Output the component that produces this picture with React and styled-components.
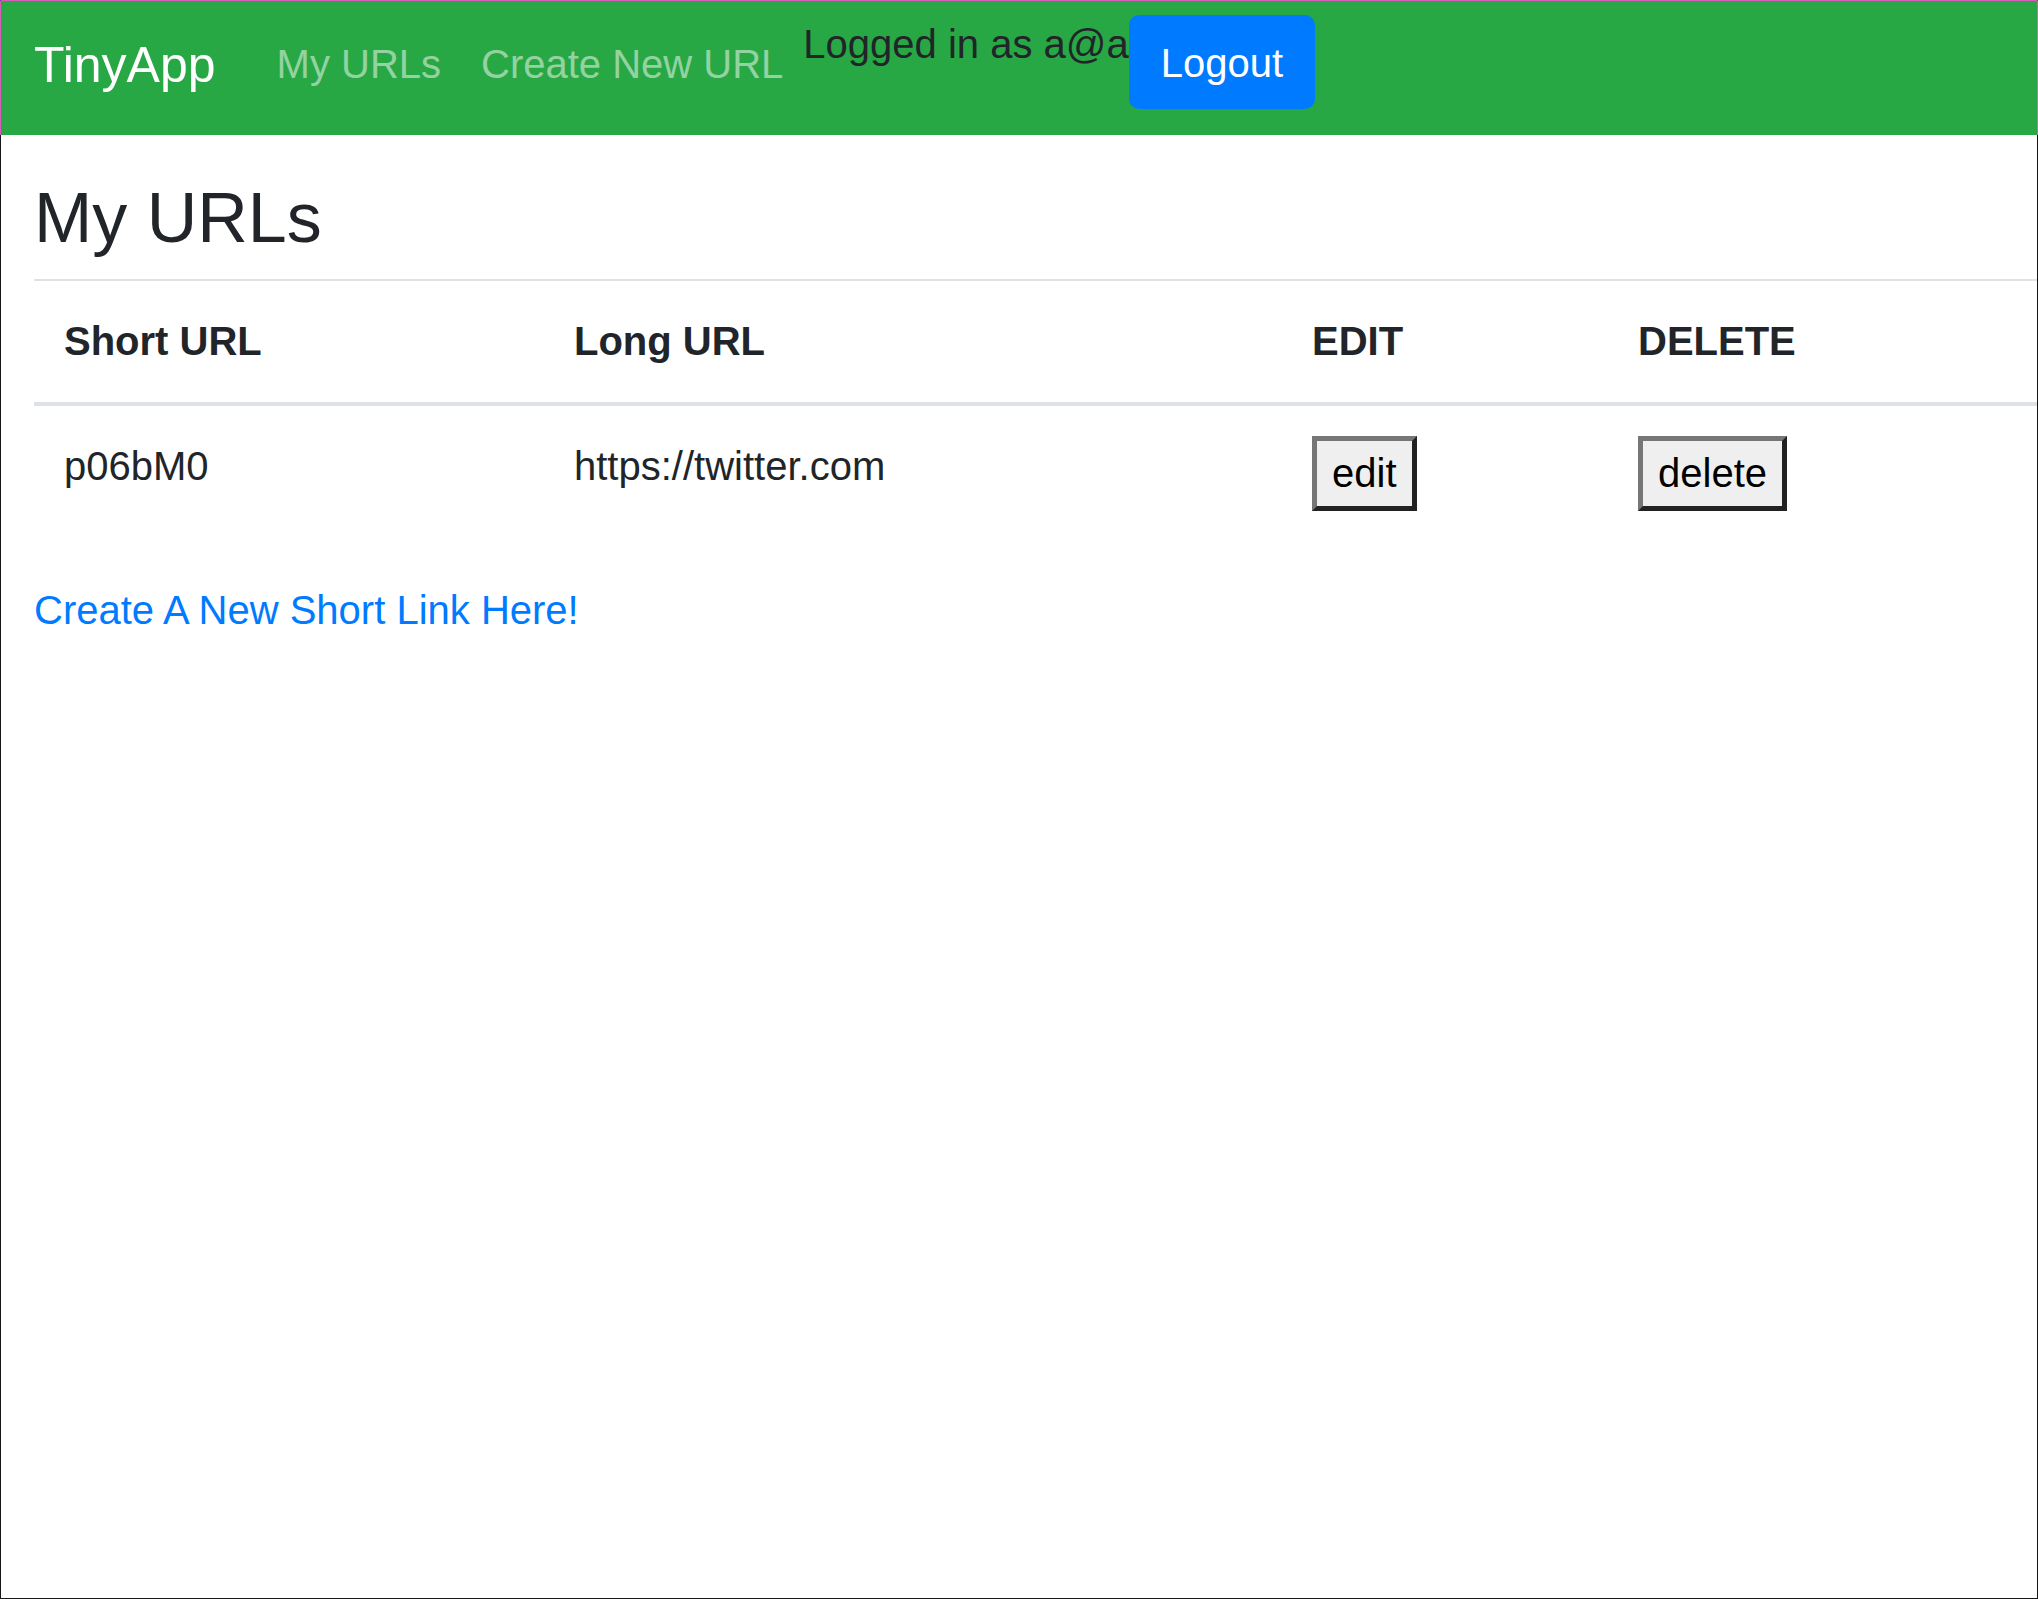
import React from "react";
import styled, { createGlobalStyle } from "styled-components";

const GlobalStyle = createGlobalStyle`
  html, body {
    margin: 0;
    padding: 0;
  }
  body {
    font-family: "Liberation Sans", Arial, sans-serif;
    color: #212529;
    background: #ffffff;
  }
  * {
    box-sizing: border-box;
  }
`;

const urls = [{ short: "p06bM0", long: "https://twitter.com" }];

const columns = [
  { label: "Short URL", width: 510 },
  { label: "Long URL", width: 738 },
  { label: "EDIT", width: 326 },
  { label: "DELETE", width: 429 },
];

const App = () => {
  return (
    <Frame>
      <GlobalStyle />
      <Navbar>
        <Brand href="#">TinyApp</Brand>
        <NavList>
          <li>
            <NavLink href="#">My URLs</NavLink>
          </li>
          <li>
            <NavLink href="#">Create New URL</NavLink>
          </li>
        </NavList>
        <LoggedIn>Logged in as a@a</LoggedIn>
        <LogoutButton type="button">Logout</LogoutButton>
      </Navbar>

      <Main>
        <Title>My URLs</Title>
        <UrlTable>
          <colgroup>
            {columns.map((col) => (
              <col key={col.label} style={{ width: col.width }} />
            ))}
          </colgroup>
          <thead>
            <tr>
              {columns.map((col) => (
                <HeadCell key={col.label}>{col.label}</HeadCell>
              ))}
            </tr>
          </thead>
          <tbody>
            {urls.map((url) => (
              <tr key={url.short}>
                <Cell>{url.short}</Cell>
                <Cell>{url.long}</Cell>
                <Cell>
                  <RowButton type="button">edit</RowButton>
                </Cell>
                <Cell>
                  <RowButton type="button">delete</RowButton>
                </Cell>
              </tr>
            ))}
          </tbody>
        </UrlTable>
        <CreateLink href="#">Create A New Short Link Here!</CreateLink>
      </Main>
    </Frame>
  );
};

const Frame = styled.div`
  min-height: 100vh;
  border: 1px solid #161616;
  border-top-color: #d85cbc;
  display: flex;
  flex-direction: column;
`;

const Navbar = styled.nav`
  display: flex;
  align-items: flex-start;
  height: 134px;
  margin: 0 -1px;
  padding: 0 0 0 33px;
  background: #28a745;
  border-left: 1px solid #d85cbc;
  border-right: 1px solid #d85cbc;
`;

const Brand = styled.a`
  margin-top: 26.5px;
  margin-right: 41px;
  font-size: 50px;
  line-height: 1.5;
  color: #ffffff;
  text-decoration: none;
  white-space: nowrap;
`;

const NavList = styled.ul`
  display: flex;
  margin: 33px 0 0;
  padding: 0;
  list-style: none;
`;

const NavLink = styled.a`
  display: block;
  padding: 0 20px;
  font-size: 40px;
  line-height: 1.5;
  color: rgba(255, 255, 255, 0.5);
  text-decoration: none;
  white-space: nowrap;
`;

const LoggedIn = styled.span`
  margin-top: 13px;
  font-size: 40px;
  line-height: 1.5;
  color: #212529;
  white-space: nowrap;
`;

const LogoutButton = styled.button`
  margin-top: 14px;
  padding: 18px 32px 16px;
  border: none;
  border-radius: 10px;
  background: #007bff;
  color: #ffffff;
  font-family: inherit;
  font-size: 40px;
  line-height: 1.5;
  cursor: pointer;
`;

const Main = styled.main`
  padding: 0 0 0 33px;
`;

const Title = styled.h1`
  margin: 40.75px 0 19.25px;
  font-size: 70px;
  font-weight: 500;
  line-height: 1.2;
  color: #212529;
`;

const UrlTable = styled.table`
  width: 2003px;
  table-layout: fixed;
  border-collapse: collapse;
  margin-bottom: 38px;
  font-size: 40px;
  line-height: 1.5;
  color: #212529;
`;

const HeadCell = styled.th`
  padding: 30px 30px 31px;
  text-align: left;
  font-weight: 700;
  border-top: 2px solid #dee2e6;
  border-bottom: 4px solid #dee2e6;
  vertical-align: top;
`;

const Cell = styled.td`
  padding: 30px;
  vertical-align: top;
`;

const RowButton = styled.button`
  display: block;
  padding: 2px 15px 3px;
  border: 5px solid;
  border-color: #767676 #222222 #222222 #767676;
  background: #efefef;
  color: #000000;
  font-family: inherit;
  font-size: 40px;
  line-height: 1.5;
  cursor: pointer;
`;

const CreateLink = styled.a`
  display: inline-block;
  margin-top: 1px;
  font-size: 40px;
  line-height: 1.5;
  color: #007bff;
  text-decoration: none;
`;

export default App;
